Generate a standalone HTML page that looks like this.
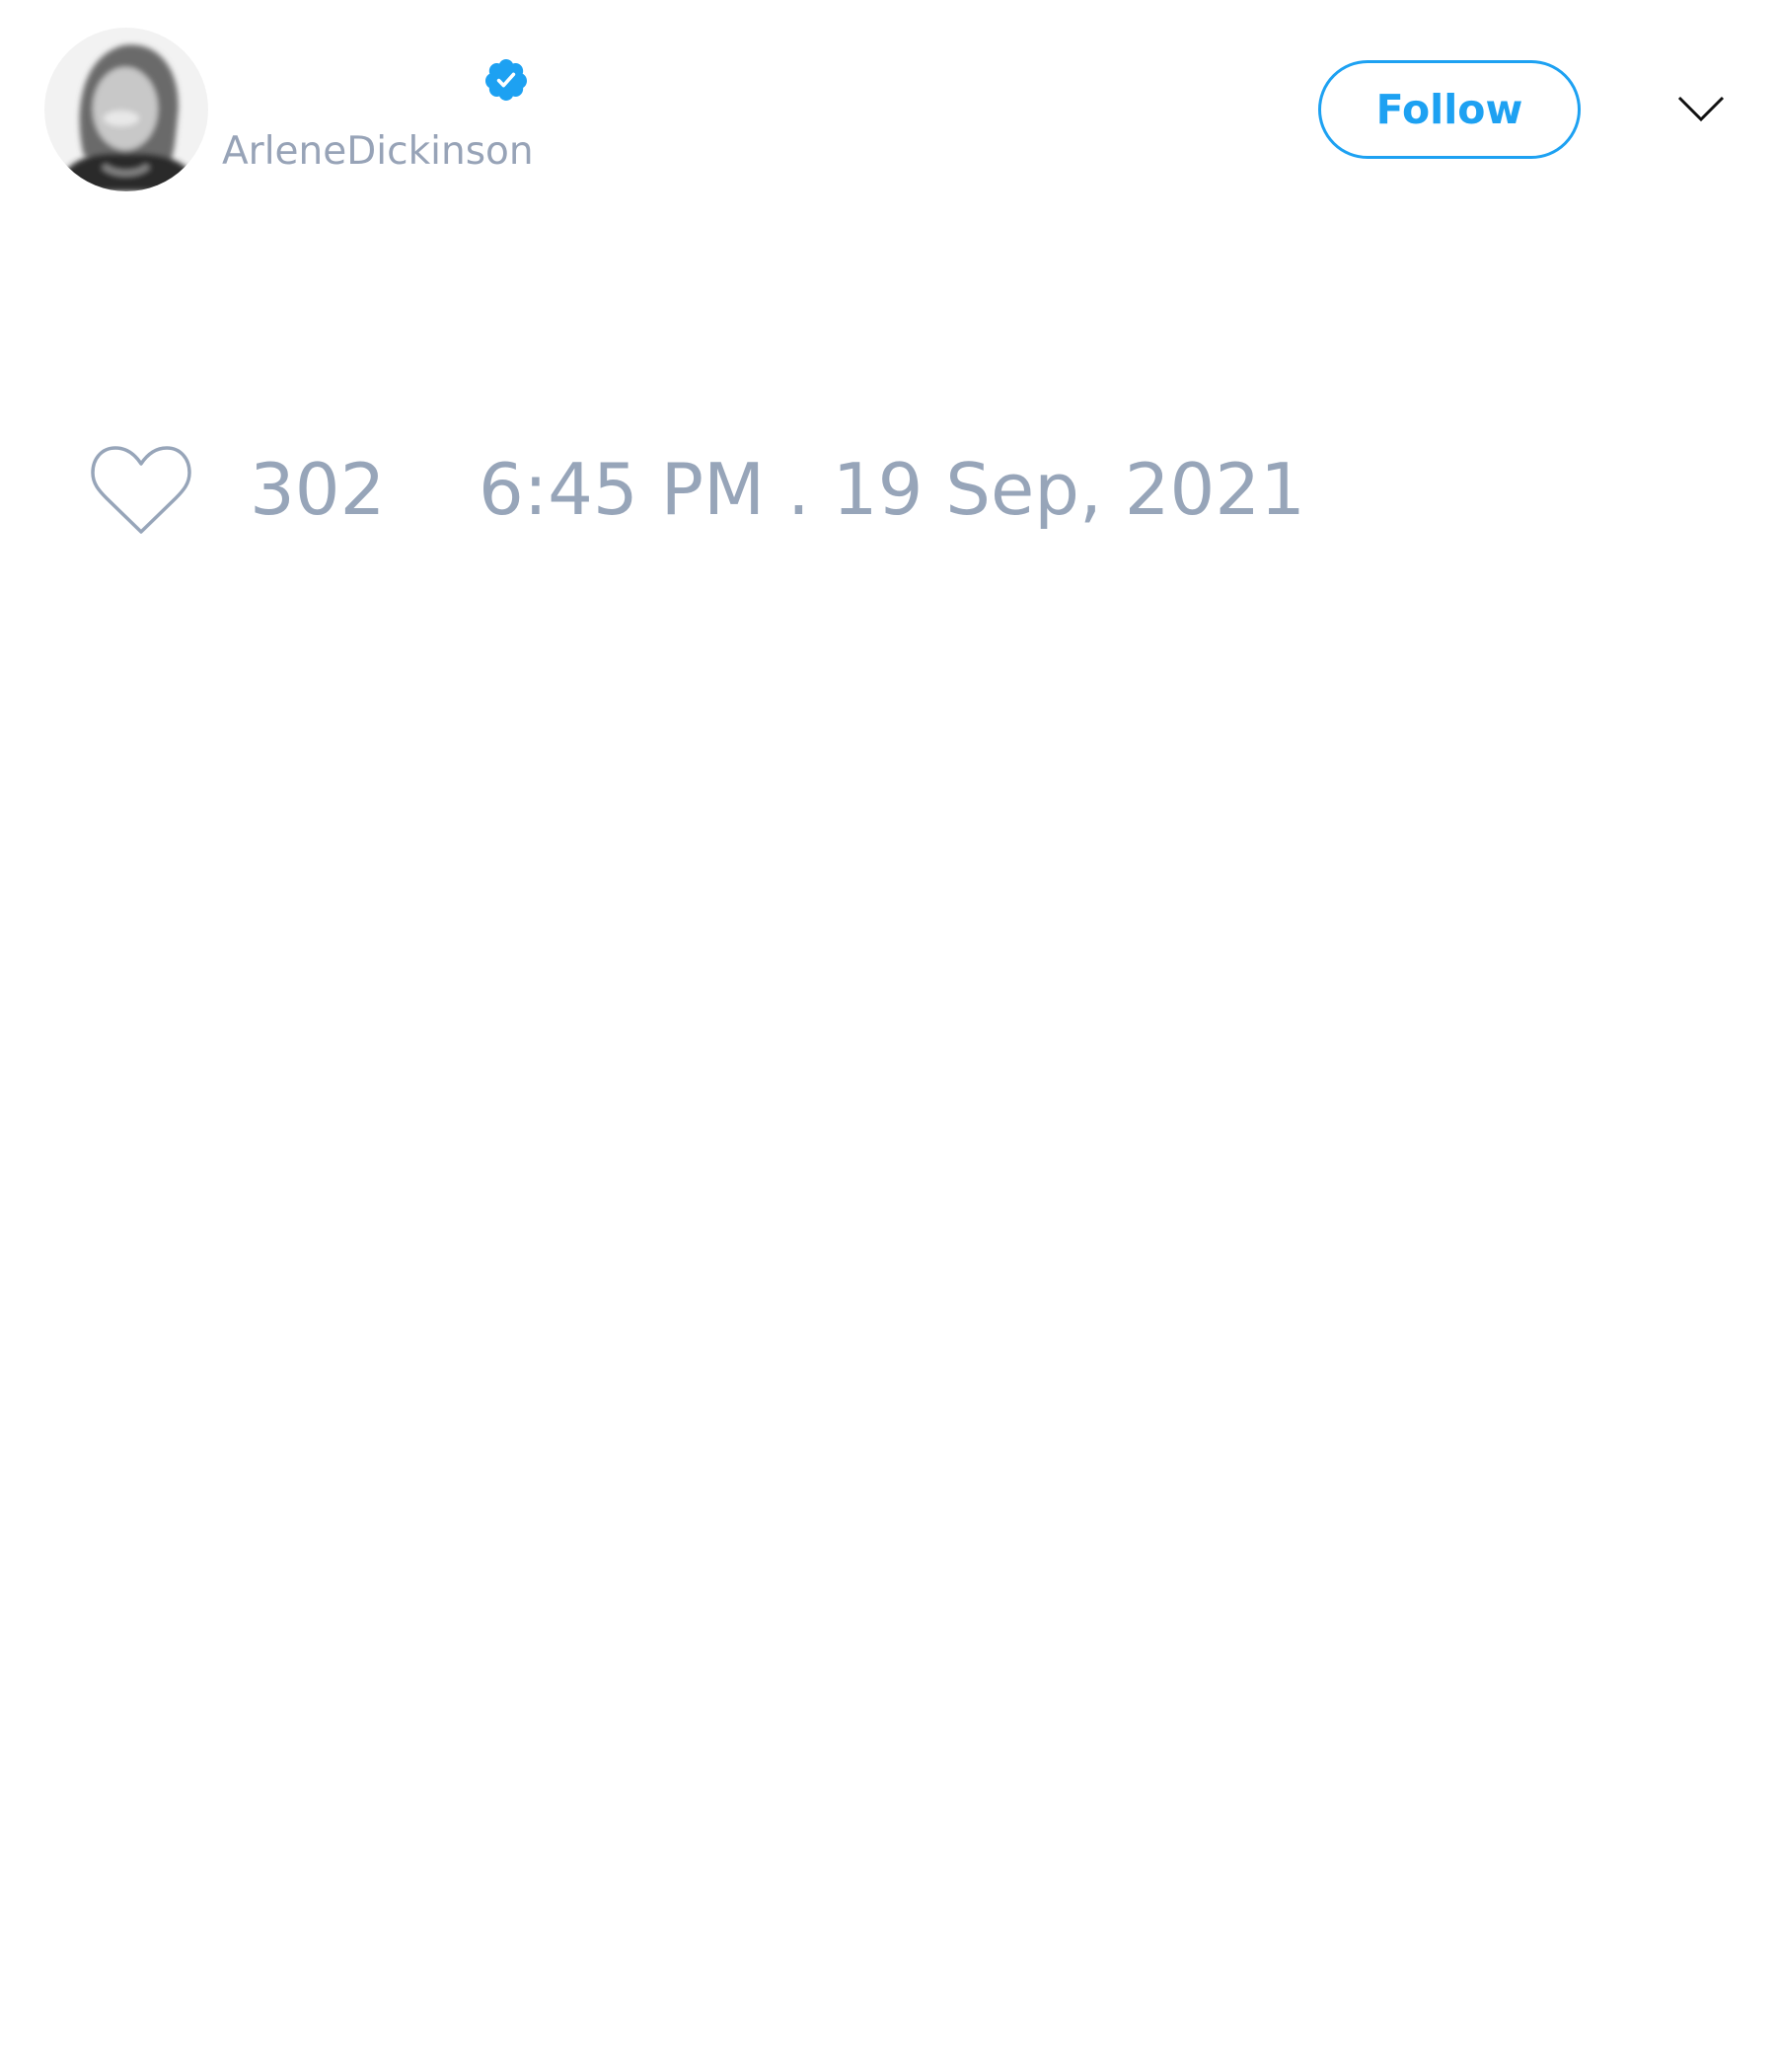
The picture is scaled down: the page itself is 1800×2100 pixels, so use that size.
<!DOCTYPE html>
<html><head><meta charset="utf-8"><style>
html,body{margin:0;padding:0;background:#fff;width:1800px;height:2100px;overflow:hidden;font-family:"DejaVu Sans","Liberation Sans",sans-serif;position:relative}
.abs{position:absolute}
.handle{left:225px;top:134px;font-size:39px;color:#97a3b7;line-height:1;white-space:nowrap}
.btn{left:1336px;top:61px;width:260px;height:94px;border:3px solid #1da1f2;border-radius:50px;color:#1da1f2;font-weight:bold;font-size:41px;line-height:94px;text-align:center}
.num{font-size:72px;color:#97a5b9;line-height:1;white-space:nowrap}
</style></head><body>
<svg class="abs" style="left:45px;top:28px" width="166" height="166" viewBox="0 0 166 166">
<defs><clipPath id="c"><circle cx="83" cy="83" r="83"/></clipPath>
<filter id="b"><feGaussianBlur stdDeviation="3"/></filter></defs>
<g clip-path="url(#c)">
<rect width="166" height="166" fill="#f2f2f2"/>
<g filter="url(#b)">
<path d="M40 130 C30 90 35 30 80 18 C120 12 140 50 135 90 C133 110 132 125 128 135 Z" fill="#6a6a6a"/>
<ellipse cx="82" cy="82" rx="33" ry="42" fill="#c8c8c8"/>
<ellipse cx="78" cy="92" rx="18" ry="8" fill="#e8e8e8"/>
<path d="M10 166 C20 135 45 125 83 128 C120 125 150 135 160 166 Z" fill="#2c2c2c"/>
<path d="M60 140 C70 150 95 150 105 140" stroke="#888" stroke-width="6" fill="none"/>
</g></g></svg>
<svg class="abs" style="left:489px;top:57px" width="48" height="48" viewBox="0 0 24 24"><path fill="#1da1f2" d="M22.5 12.5c0-1.58-.875-2.950-2.148-3.6.154-.435.238-.905.238-1.4 0-2.21-1.71-3.998-3.818-3.998-.47 0-.92.084-1.336.25C14.818 2.415 13.51 1.5 12 1.5s-2.816.917-3.437 2.250c-.415-.165-.866-.25-1.336-.25-2.11 0-3.818 1.79-3.818 4 0 .494.083.964.237 1.4-1.272.65-2.147 2.018-2.147 3.6 0 1.495.782 2.798 1.942 3.486-.02.17-.032.34-.032.514 0 2.21 1.708 4 3.818 4 .47 0 .92-.086 1.335-.25.62 1.334 1.926 2.25 3.437 2.25 1.512 0 2.818-.916 3.437-2.25.415.163.865.248 1.336.248 2.11 0 3.818-1.79 3.818-4 0-.174-.012-.344-.033-.513 1.158-.687 1.943-1.99 1.943-3.484z"/><path fill="none" stroke="#fff" stroke-width="1.8" stroke-linecap="round" stroke-linejoin="round" d="M8.3 12.3l2.4 2.5 5-5.6"/></svg>
<div class="abs handle">ArleneDickinson</div>
<div class="abs btn">Follow</div>
<svg class="abs" style="left:1700px;top:96px" width="48" height="30" viewBox="0 0 48 30"><path d="M2 3 L24 25 L46 3" fill="none" stroke="#111" stroke-width="3"/></svg>
<svg class="abs" style="left:90px;top:450px" width="108" height="94" viewBox="0 0 108 94"><path d="M53 20 C45 8 36 4 27 4 C13 4 4 15 4 29 C4 40 10 47 18 55 L53 89 L88 55 C96 47 102 40 102 29 C102 15 93 4 79 4 C70 4 61 8 53 20 Z" fill="none" stroke="#97a5b9" stroke-width="3.5" stroke-linejoin="round"/></svg>
<div class="abs num" style="left:253px;top:460px">302</div>
<div class="abs num" style="left:485px;top:460px">6:45 PM . 19 Sep, 2021</div>
</body></html>
